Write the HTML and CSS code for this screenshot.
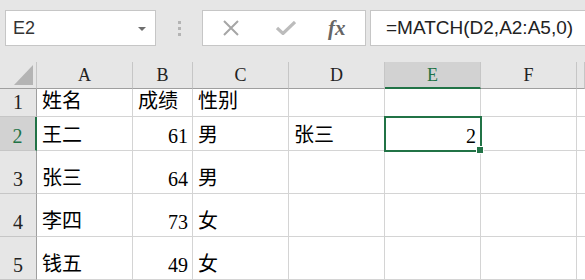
FILE: index.html
```html
<!DOCTYPE html>
<html lang="zh">
<head>
<meta charset="UTF-8">
<title>MATCH</title>
<link rel="stylesheet" href="styles.css">
</head>
<body>

<div class="bar">
  <div class="namebox">
    <span>E2</span>
    <span class="arrow"></span>
  </div>
  <div class="dots"><i></i><i></i><i></i></div>
  <div class="btns">
    <svg class="ico" width="18" height="16" viewBox="0 0 18 16"><path d="M2 1 L16 15 M16 1 L2 15" stroke="#a6a6a6" stroke-width="2" fill="none"/></svg>
    <svg class="ico" width="20" height="14" viewBox="0 0 20 14"><path d="M1 7 L7 12.5 L19 1" stroke="#bcbcbc" stroke-width="3.2" fill="none"/></svg>
    <span class="fx">fx</span>
  </div>
  <div class="formula">=MATCH(D2,A2:A5,0)</div>
</div>

<div class="sheet">
  <div class="corner"><span class="tri"></span></div>
  <div class="ch">A</div>
  <div class="ch">B</div>
  <div class="ch">C</div>
  <div class="ch">D</div>
  <div class="ch sel">E</div>
  <div class="ch">F</div>
  <div class="ch"></div>

  <div class="rh">1</div>
  <div class="c">姓名</div>
  <div class="c">成绩</div>
  <div class="c">性别</div>
  <div class="c"></div><div class="c"></div><div class="c"></div><div class="c"></div>

  <div class="rh sel">2</div>
  <div class="c">王二</div>
  <div class="c num">61</div>
  <div class="c">男</div>
  <div class="c">张三</div>
  <div class="c num active">2<span class="handle"></span></div>
  <div class="c"></div><div class="c"></div>

  <div class="rh">3</div>
  <div class="c">张三</div>
  <div class="c num">64</div>
  <div class="c">男</div>
  <div class="c"></div><div class="c"></div><div class="c"></div><div class="c"></div>

  <div class="rh">4</div>
  <div class="c">李四</div>
  <div class="c num">73</div>
  <div class="c">女</div>
  <div class="c"></div><div class="c"></div><div class="c"></div><div class="c"></div>

  <div class="rh">5</div>
  <div class="c">钱五</div>
  <div class="c num">49</div>
  <div class="c">女</div>
  <div class="c"></div><div class="c"></div><div class="c"></div><div class="c"></div>
</div>

</body>
</html>
```

FILE: styles.css
```css
body { margin:0; background:#e6e6e6; font-family:"Liberation Serif", "Noto Sans CJK SC", serif; overflow:hidden; }

.bar { display:flex; align-items:center; height:36px; padding:10px 0 0 5px; }
.namebox { width:151px; height:36px; box-sizing:border-box; background:#fff; border:1px solid #c6c6c6; display:flex; align-items:center; justify-content:space-between; padding:0 9px 0 7px; font-family:"Liberation Sans", sans-serif; font-size:18px; color:#333; }
.arrow { width:0; height:0; border-left:4px solid transparent; border-right:4px solid transparent; border-top:4px solid #6e6e6e; margin-top:1px; }
.dots { width:46px; display:flex; flex-direction:column; align-items:center; gap:3px; }
.dots i { display:block; width:3px; height:3px; background:#b4b4b4; }
.btns { width:164px; height:36px; box-sizing:border-box; background:#fff; border:1px solid #c6c6c6; display:flex; align-items:center; padding-left:19px; gap:36px; }
.fx { font-family:"Liberation Serif", serif; font-style:italic; font-weight:bold; font-size:21px; color:#666; margin-left:-4px; }
.formula { flex:1; height:36px; box-sizing:border-box; background:#fff; border:1px solid #c6c6c6; border-right:none; margin-left:4px; padding-left:15px; font-family:"Liberation Sans", sans-serif; font-size:19px; color:#222; display:flex; align-items:center; }

.sheet { display:grid; grid-template-columns:37px 96px 60px 96px 96px 96px 96px 8px; grid-template-rows:27px 28px 34px 43px 43px 43px; margin-top:16px; background:#fff; }
.corner, .ch, .rh { background:#e6e6e6; color:#222; }
.corner { border-right:1px solid #c6c6c6; border-bottom:1px solid #9f9f9f; position:relative; }
.tri { position:absolute; right:3px; bottom:3px; width:0; height:0; border-left:19px solid transparent; border-bottom:20px solid #b4b4b4; }
.ch { border-right:1px solid #c6c6c6; border-bottom:1px solid #9f9f9f; text-align:center; font-size:18px; line-height:27px; }
.ch.sel { background:#d2d2d2; color:#217346; border-bottom:2px solid #217346; }
.rh { border-right:1px solid #9f9f9f; border-bottom:1px solid #c6c6c6; text-align:center; font-size:20px; display:flex; align-items:flex-end; justify-content:center; padding-bottom:2px; }
.rh.sel { background:#d2d2d2; color:#217346; border-right:2px solid #217346; }
.c { border-right:1px solid #d4d4d4; border-bottom:1px solid #d4d4d4; font-size:20px; color:#000; display:flex; align-items:flex-end; padding:0 4px 2px 5px; position:relative; }
.num { justify-content:flex-end; }
.active { outline:2px solid #217346; outline-offset:-1px; z-index:1; padding-right:4px; }
.handle { position:absolute; right:-4px; bottom:-4px; width:6px; height:6px; background:#217346; border:1px solid #fff; }
```
